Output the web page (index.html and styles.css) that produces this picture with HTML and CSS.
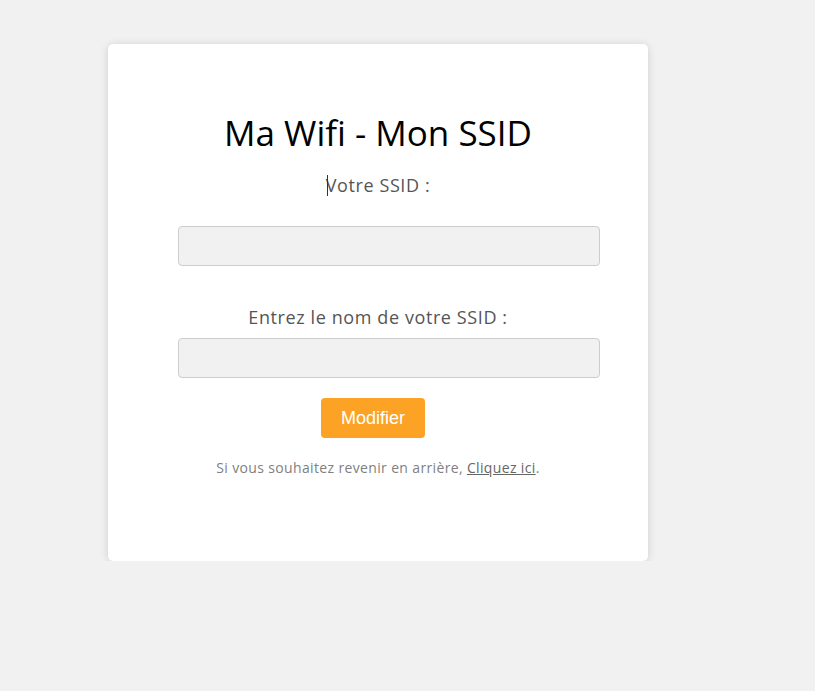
FILE: index.html
```html
<!DOCTYPE html>
<html lang="fr">
<head>
<meta charset="utf-8">
<title>Ma Wifi - Mon SSID</title>
<link rel="stylesheet" href="styles.css">
</head>
<body>
<div class="card">
  <h1 class="title">Ma Wifi - Mon SSID</h1>
  <p class="label label-first"><span class="caret"></span>Votre SSID :</p>
  <div class="field field-first"></div>
  <p class="label label-second">Entrez le nom de votre SSID :</p>
  <div class="field field-second"></div>
  <button class="btn" type="button">Modifier</button>
  <p class="back">Si vous souhaitez revenir en arrière, <a href="#" class="back-link">Cliquez ici</a>.</p>
</div>
</body>
</html>
```

FILE: styles.css
```css
html, body {
  margin: 0;
  background: #f1f1f1;
}
body {
  padding: 44px 0 0 108px;
  font-family: "Open Sans", "DejaVu Sans", sans-serif;
}
.card {
  box-sizing: border-box;
  width: 540px;
  height: 517px;
  background: #fff;
  border-radius: 5px;
  box-shadow: 0 1px 8px rgba(0, 0, 0, 0.14);
  padding-top: 67px;
  display: flex;
  flex-direction: column;
  align-items: center;
}
.title {
  margin: 0;
  font-size: 35px;
  line-height: 44px;
  font-weight: 400;
  color: #000;
}
.label {
  margin: 0;
  font-size: 18px;
  line-height: 24px;
  font-weight: 500;
  letter-spacing: 0.6px;
  color: #555;
  position: relative;
}
.label-first { margin-top: 18px; }
.label-second { margin-top: 39px; }
.caret {
  position: absolute;
  left: 1px;
  top: 2px;
  width: 1px;
  height: 21px;
  background: #333;
}
.field {
  box-sizing: border-box;
  width: 422px;
  height: 40px;
  margin-left: 22px;
  background: #f1f1f1;
  border: 1px solid #cdcdcd;
  border-radius: 4px;
}
.field-first { margin-top: 29px; }
.field-second { margin-top: 9px; }
.btn {
  margin: 20px 10px 0 0;
  width: 104px;
  height: 40px;
  border: 0;
  border-radius: 4px;
  background: #fca326;
  color: #fff;
  font-family: "Liberation Sans", Arial, sans-serif;
  font-size: 18px;
  padding: 0;
}
.back {
  margin: 21px 0 0;
  font-size: 14px;
  line-height: 18px;
  letter-spacing: 0.35px;
  color: #808080;
}
.back-link {
  color: #666;
  text-decoration: underline;
}
```
